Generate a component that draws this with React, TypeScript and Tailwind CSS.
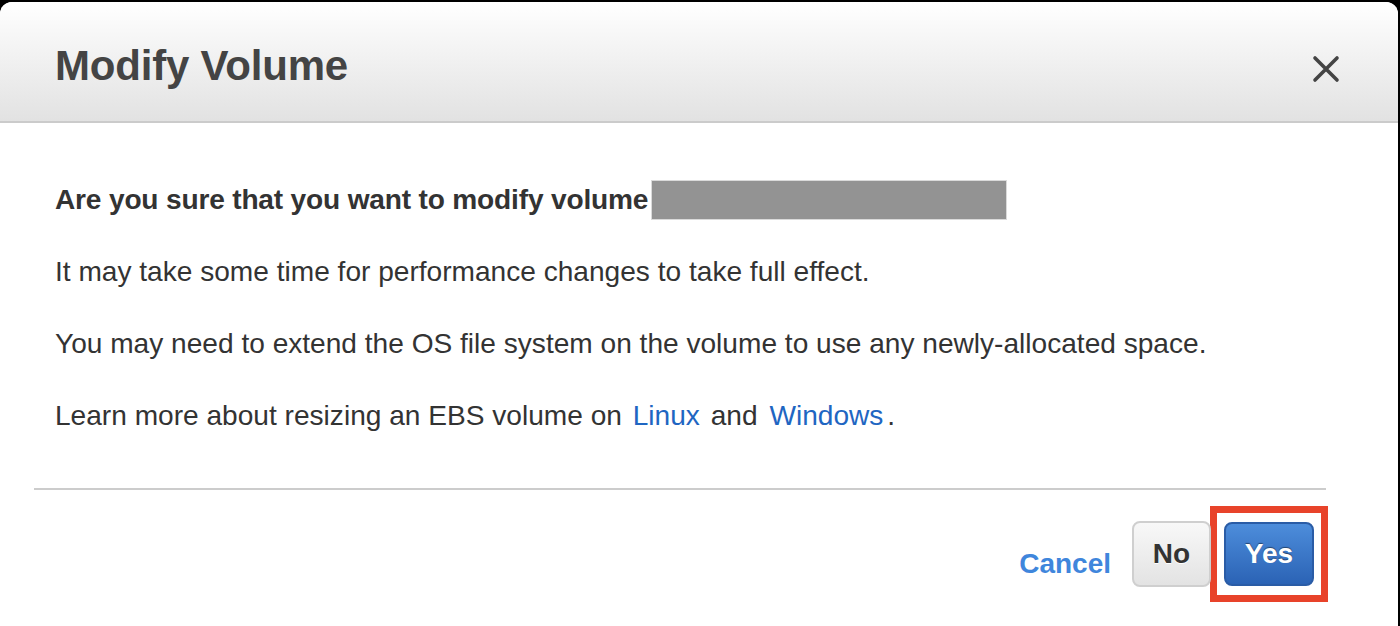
import React from "react";

export default function App() {
  return (
    <div
      className="w-[1400px] h-[626px] bg-black pt-[2px] overflow-hidden"
      style={{ fontFamily: '"Liberation Sans", Arial, Helvetica, sans-serif' }}
    >
      <div className="h-full w-[1398px] bg-white rounded-t-[12px] flex flex-col">
        <div className="h-[121px] shrink-0 rounded-t-[12px] border-b-2 border-[#cbcbcb] bg-gradient-to-b from-white to-[#e2e2e2] flex items-center justify-between pl-[55px] pr-[58px] pt-[8px]">
          <h1 className="text-[42px] font-bold text-[#444] leading-none tracking-[-0.2px]">
            Modify Volume
          </h1>
          <svg width="28" height="28" viewBox="0 0 28 28" className="mt-[6px]">
            <path
              d="M3 3 L25 25 M25 3 L3 25"
              stroke="#444"
              strokeWidth="3.6"
              strokeLinecap="round"
            />
          </svg>
        </div>

        <div className="px-[55px] pt-[57px] flex flex-col gap-[32px] text-[28.1px] text-[#333] leading-[40px]">
          <div className="flex items-center">
            <span className="font-bold text-[#333] tracking-[-0.18px]">
              Are you sure that you want to modify volume
            </span>
            <span className="ml-[3px] inline-block w-[356px] h-[40px] bg-[#939393] border border-[#dadada]" />
          </div>
          <p>It may take some time for performance changes to take full effect.</p>
          <p>
            You may need to extend the OS file system on the volume to use any
            newly-allocated space.
          </p>
          <p>
            Learn more about resizing an EBS volume on{" "}
            <a className="px-[3px] text-[#1f66c2]">Linux</a> and{" "}
            <a className="px-[4px] text-[#1f66c2]">Windows</a>.
          </p>
        </div>

        <div className="ml-[34px] mr-[72px] mt-[52px] h-[2px] bg-[#cccccc]" />

        <div className="flex items-center justify-end pr-[70px] mt-[16px]">
          <span className="mt-[20px] text-[28px] font-bold text-[#3f86dc] mr-[21px]">
            Cancel
          </span>
          <button className="w-[79px] h-[66px] rounded-[8px] border-2 border-[#cfcfcf] bg-gradient-to-b from-[#f8f8f8] to-[#e3e3e3] text-[28px] font-bold text-[#333] [text-shadow:0_1px_0_#fff] relative z-10 -mr-[1px]">
            No
          </button>
          <div className="border-[7px] border-[#e8432a] px-[7px] py-[9px] bg-white">
            <button className="block w-[90px] h-[64px] rounded-[8px] border-2 border-[#2a5ca6] bg-gradient-to-b from-[#4d8ddb] to-[#2b63b5] text-[28px] font-bold text-white [text-shadow:0_-1px_1px_rgba(0,0,0,0.45)]">
              Yes
            </button>
          </div>
        </div>
      </div>
    </div>
  );
}
